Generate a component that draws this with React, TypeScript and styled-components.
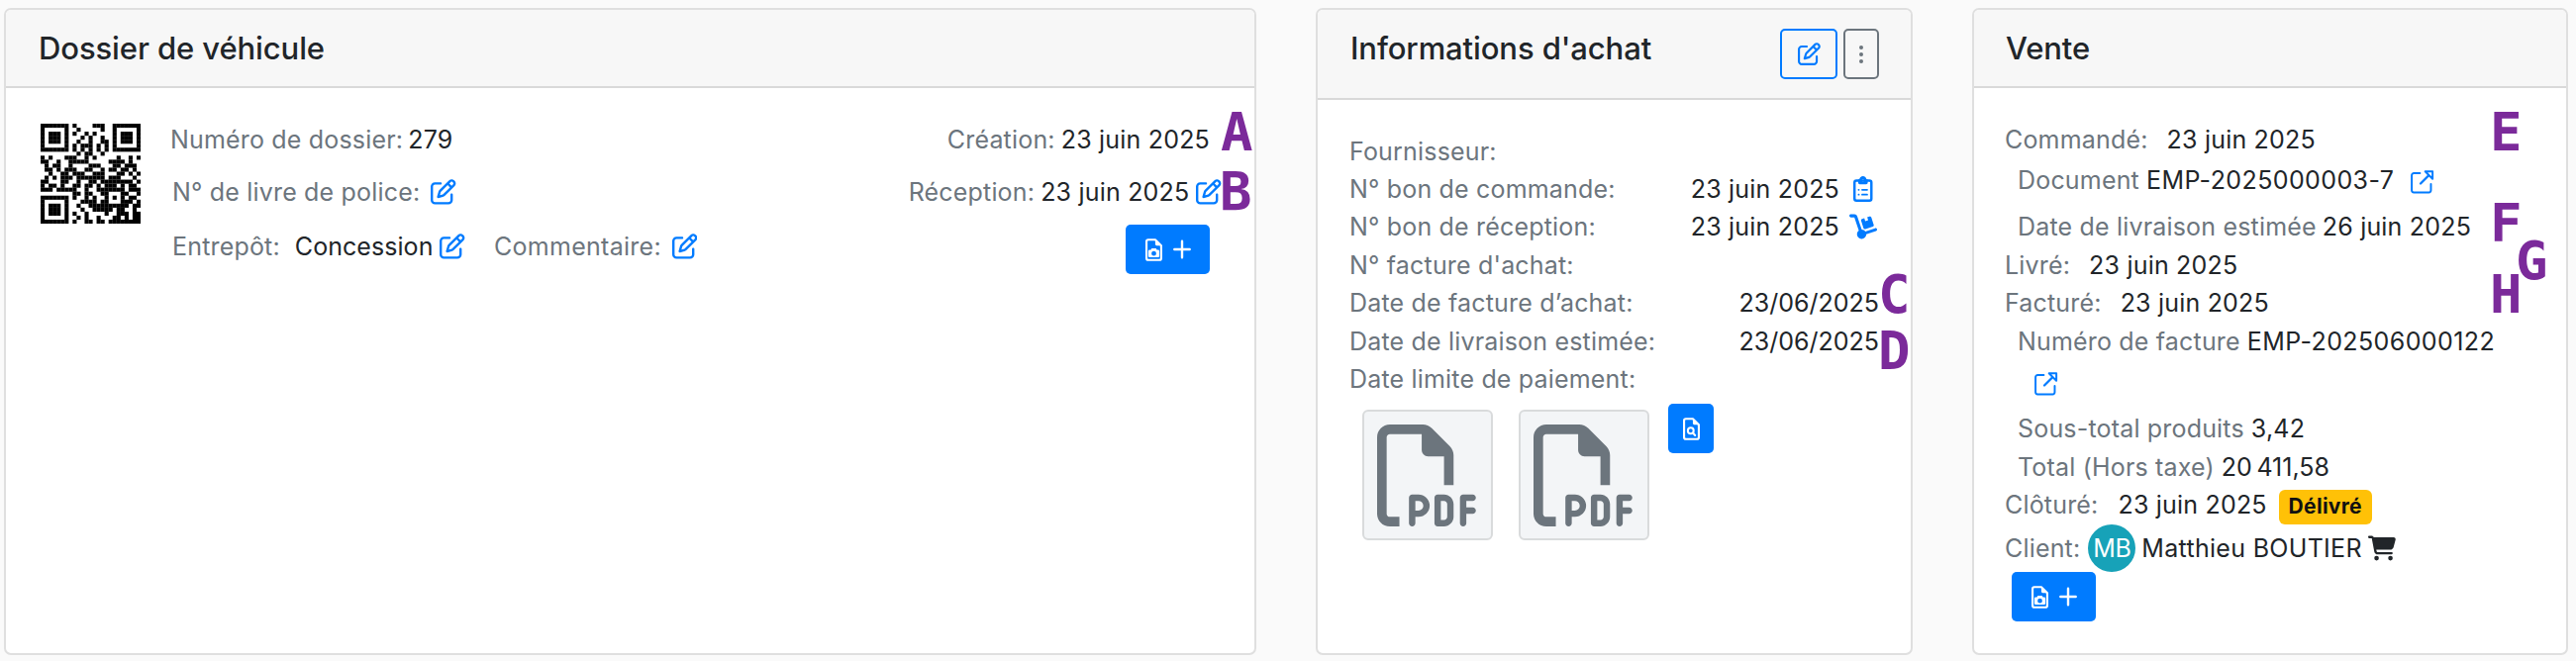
import React from 'react';
import styled, { createGlobalStyle } from 'styled-components';
import { FaCartShopping, FaDolly, FaRegFilePdf, FaRegPenToSquare } from 'react-icons/fa6';

const GlobalStyle = createGlobalStyle`
  *, *::before, *::after { box-sizing: border-box; }
  body {
    margin: 0;
    background: #fafafa;
    color: #212529;
    font-family: Inter, "Liberation Sans", sans-serif;
    font-size: 25px;
    line-height: 38px;
    letter-spacing: 0.18px;
  }
  svg { display: block; flex: none; }
`;

const Page = styled.main`
  position: relative;
  display: grid;
  grid-template-columns: 1265px 603px 602px;
  column-gap: 60px;
  width: 2602px;
  height: 668px;
  padding: 8px 0 6px 4px;
  overflow: hidden;
`;

const Card = styled.section`
  display: flex;
  flex-direction: column;
  border: 2px solid #dfdfdf;
  border-radius: 7px;
  background: #fff;
  overflow: hidden;
`;

const CardHeader = styled.header<{ $inset?: number }>`
  display: flex;
  justify-content: space-between;
  align-items: flex-start;
  padding: 19px 32px 19px ${p => p.$inset ?? 33}px;
  border-bottom: 2px solid #d9d9d9;
  background: #f7f7f7;
`;

const Title = styled.h5`
  margin: 1px 0 0;
  font-size: 31px;
  font-weight: 500;
  line-height: 38px;
  letter-spacing: -0.1px;
`;

const HeaderActions = styled.div`
  display: flex;
  gap: 6px;
`;

const OutlineButton = styled.button<{ $tone: string; $width: number }>`
  display: flex;
  align-items: center;
  justify-content: center;
  width: ${p => p.$width}px;
  height: 51px;
  padding: 0;
  border: 2px solid ${p => p.$tone};
  border-radius: 5px;
  background: transparent;
  color: ${p => p.$tone};
`;

const PrimaryButton = styled.button<{ $width?: number }>`
  display: flex;
  align-items: center;
  justify-content: center;
  gap: 11px;
  width: ${p => p.$width ?? 85}px;
  height: 50px;
  padding: 0;
  border: 0;
  border-radius: 5px;
  background: #007bff;
  color: #fff;
`;

const FileBody = styled.div`
  display: flex;
  padding: 33px 45px 0 35px;
`;

const QrBox = styled.div`
  width: 102px;
  margin: 3px 29px 0 0;
`;

const Column = styled.div<{ $end?: boolean }>`
  display: flex;
  flex-direction: column;
  align-items: ${p => (p.$end ? 'flex-end' : 'flex-start')};
  flex: ${p => (p.$end ? 'none' : '1')};
`;

const PurchaseBody = styled.div`
  padding: 33px 32px 0 32px;
`;

const SaleBody = styled.div`
  padding: 33px 20px 0 31px;
`;

const Row = styled.div<{ $top?: number; $indent?: number; $h?: number }>`
  display: flex;
  align-items: center;
  height: ${p => p.$h ?? 38}px;
  margin-top: ${p => p.$top ?? 0}px;
  padding-left: ${p => p.$indent ?? 0}px;
  white-space: nowrap;
`;

const Label = styled.span<{ $track?: number; $gap?: number }>`
  margin-left: ${p => p.$gap ?? 0}px;
  color: #6c757d;
  letter-spacing: ${p => p.$track ?? 0.18}px;
`;

const Value = styled.span<{ $gap?: number; $track?: number; $end?: boolean }>`
  margin-left: ${p => (p.$end ? 'auto' : `${p.$gap ?? 7}px`)};
  letter-spacing: ${p => p.$track ?? 0.2}px;
`;

const IconLink = styled.a<{ $gap: number; $drop?: number; $overhang?: number }>`
  display: flex;
  margin-left: ${p => p.$gap}px;
  margin-top: ${p => p.$drop ?? 0}px;
  margin-right: ${p => -(p.$overhang ?? 0)}px;
  color: #007bff;
`;

const IconSlot = styled.a`
  display: flex;
  justify-content: center;
  width: 28px;
  margin: 0 2px 0 10px;
  color: #007bff;
`;

const ActionSpot = styled.div<{ $top: number; $left?: number }>`
  margin-top: ${p => p.$top}px;
  margin-left: ${p => p.$left ?? 0}px;
`;

const Attachments = styled.div`
  display: flex;
  align-items: flex-start;
  padding: 6px 0 0 13px;
`;

const Thumb = styled.div`
  display: flex;
  align-items: center;
  width: 132px;
  height: 132px;
  margin: 6px 26px 0 0;
  padding-left: 13px;
  border: 2px solid #d9dbdc;
  border-radius: 6px;
  background: #f3f5f7;
  color: #6c757d;
`;

const PreviewSpot = styled.div`
  margin-left: -7px;
`;

const StatusBadge = styled.span`
  width: 94px;
  height: 35px;
  margin: 5px 0 0 12px;
  border-radius: 6px;
  background: #ffc107;
  color: #111;
  font-size: 21px;
  font-weight: 700;
  line-height: 33px;
  letter-spacing: 0.3px;
  text-align: center;
`;

const Avatar = styled.span`
  width: 48px;
  height: 48px;
  margin-left: 8px;
  border-radius: 50%;
  background: #17a2b8;
  color: #fff;
  line-height: 48px;
  text-align: center;
  letter-spacing: -0.4px;
`;

const CartSpot = styled.span`
  margin-left: 6px;
  color: #212529;
`;

const Marker = styled.b<{ $x: number; $y: number }>`
  position: absolute;
  left: ${p => p.$x}px;
  top: ${p => p.$y}px;
  color: #7b2a9a;
  font: 700 54px/40px "DejaVu Sans Mono", monospace;
  letter-spacing: 0;
`;

const QR_ROWS = [
  'XXXXXXX.X....XXX..XXXXXXX',
  'X.....X..X.....X..X.....X',
  'X.XXX.X.X..X.X....X.XXX.X',
  'X.XXX.X...X.X..X..X.XXX.X',
  'X.XXX.X..X..X..XX.X.XXX.X',
  'X.....X.X.XXX.X.X.X.....X',
  'XXXXXXX.X.X.X.X.X.XXXXXXX',
  '.........X.XX..X.........',
  'X.X...XXX..X.X.....X..X.X',
  'XX..X..XXXXX.....XXXX.X..',
  '.X.XX..X....XXX...XX.XXX.',
  '.XX.X.XXX..XX..X.XX.XX.X.',
  '..X..XX.XXX..XXX...XX.X.X',
  '.X.X.XXX.XXXXXXX.XXX...X.',
  'XX...XX..X..XX.XXXXXXXX.X',
  'X.XX.X..XX.XX.X.XXX.X.XX.',
  'XXX.XXXXX..X..XXXXXXX.XXX',
  '........XX.XX..XX...XX..X',
  'XXXXXXX.X..X.X..X.X.X.XX.',
  'X.....X...XXXX.XX...XXX.X',
  'X.XXX.X..X..XXXXXXXXXX.XX',
  'X.XXX.X...X..XXXXX.XX..X.',
  'X.XXX.X.X..X....X..XXX.XX',
  'X.....X..X.X..X...XX.X.XX',
  'XXXXXXX.X..XX.XX.XXXXXXXX',
];

const QrCode = () => (
  <svg width="101" height="101" viewBox="0 0 25 25">
    {QR_ROWS.flatMap((row, y) =>
      row.split('').map((cell, x) =>
        cell === 'X' ? <rect key={`${x}-${y}`} x={x} y={y} width="1.02" height="1.02" fill="#000" /> : null,
      ),
    )}
  </svg>
);

const FileOutline = () => (
  <>
    <path
      d="M64 24h160l136 136v288a40 40 0 0 1-40 40H64a40 40 0 0 1-40-40V64a40 40 0 0 1 40-40z"
      fill="none"
      stroke="currentColor"
      strokeWidth="48"
      strokeLinejoin="round"
    />
    <path d="M224 16v112a32 32 0 0 0 32 32h112z" fill="currentColor" />
  </>
);

const FileCameraIcon = () => (
  <svg width="17" height="23" viewBox="0 0 384 512">
    <FileOutline />
    <path
      fill="currentColor"
      fillRule="evenodd"
      d="M142 224h100l18 34h28a30 30 0 0 1 30 30v110a30 30 0 0 1-30 30H96a30 30 0 0 1-30-30V288a30 30 0 0 1 30-30h28zM192 286a54 54 0 1 0 0 108a54 54 0 1 0 0-108z"
    />
  </svg>
);

const FileSearchIcon = () => (
  <svg width="17" height="23" viewBox="0 0 384 512">
    <FileOutline />
    <g fill="none" stroke="currentColor" strokeWidth="46" strokeLinecap="round">
      <circle cx="176" cy="296" r="66" />
      <path d="M226 346l50 56" />
    </g>
  </svg>
);

const PlusIcon = () => (
  <svg width="18" height="20" viewBox="0 0 18 20">
    <path d="M9 1.8v16.4M1.3 10h15.4" stroke="currentColor" strokeWidth="2.4" strokeLinecap="round" />
  </svg>
);

const ClipboardIcon = () => (
  <svg width="19.5" height="26" viewBox="0 0 384 512">
    <rect x="24" y="88" width="336" height="400" rx="40" fill="none" stroke="currentColor" strokeWidth="48" />
    <path
      fill="currentColor"
      fillRule="evenodd"
      d="M192 0c-36 0-66 27-72 64H96v64a32 32 0 0 0 32 32h128a32 32 0 0 0 32-32V64h-24c-6-37-36-64-72-64zm0 58a24 24 0 1 1 0 48a24 24 0 1 1 0-48z"
    />
    <g stroke="currentColor" strokeWidth="34" strokeLinecap="round">
      <path d="M106 272h4M176 272h100M106 368h4M176 368h100" />
    </g>
  </svg>
);

const ExternalIcon = () => (
  <svg width="23.5" height="23.5" viewBox="0 0 24 24" fill="none" stroke="currentColor">
    <path
      d="M9.6 3.1H3.3A2.2 2.2 0 0 0 1.1 5.3v15.4a2.2 2.2 0 0 0 2.2 2.2h15.4a2.2 2.2 0 0 0 2.2-2.2v-6.3"
      strokeWidth="2"
      strokeLinecap="round"
    />
    <path d="M10.2 13.8L18.4 5.6" strokeWidth="2.3" strokeLinecap="round" />
    <path d="M15 1.3h7.6v7.6z" strokeWidth="2" strokeLinejoin="round" />
  </svg>
);

const DotsIcon = () => (
  <svg width="4" height="20" viewBox="0 0 4 20" fill="currentColor">
    <circle cx="2" cy="3" r="2" />
    <circle cx="2" cy="10" r="2" />
    <circle cx="2" cy="17" r="2" />
  </svg>
);

const EditLink = ({ gap, overhang }: { gap: number; overhang?: number }) => (
  <IconLink $gap={gap} $overhang={overhang}>
    <FaRegPenToSquare size={25.6} />
  </IconLink>
);

const AddFileButton = () => (
  <PrimaryButton>
    <FileCameraIcon />
    <PlusIcon />
  </PrimaryButton>
);

const MARKERS: [string, number, number][] = [
  ['A', 1233, 114],
  ['B', 1232, 174],
  ['C', 1897, 278],
  ['D', 1897, 335],
  ['E', 2515, 114],
  ['F', 2515, 206],
  ['G', 2541, 244],
  ['H', 2515, 278],
];

const VehicleFile = () => (
  <Card>
    <CardHeader>
      <Title>Dossier de véhicule</Title>
    </CardHeader>
    <FileBody>
      <QrBox>
        <QrCode />
      </QrBox>
      <Column>
        <Row>
          <Label>Numéro de dossier:</Label>
          <Value $gap={5}>279</Value>
        </Row>
        <Row $top={15} $indent={2}>
          <Label>N° de livre de police:</Label>
          <EditLink gap={11} />
        </Row>
        <Row $top={17} $indent={2}>
          <Label>Entrepôt:</Label>
          <Value $gap={15} $track={0.05}>Concession</Value>
          <EditLink gap={7} />
          <Label $gap={29} $track={0.27}>Commentaire:</Label>
          <EditLink gap={11} />
        </Row>
      </Column>
      <Column $end>
        <Row>
          <Label>Création:</Label>
          <Value $gap={6}>23 juin 2025</Value>
        </Row>
        <Row $top={15}>
          <Label>Réception:</Label>
          <Value $gap={6}>23 juin 2025</Value>
          <EditLink gap={7} overhang={12} />
        </Row>
        <ActionSpot $top={14}>
          <AddFileButton />
        </ActionSpot>
      </Column>
    </FileBody>
  </Card>
);

const Purchase = () => (
  <Card>
    <CardHeader>
      <Title>Informations d'achat</Title>
      <HeaderActions>
        <OutlineButton $tone="#007bff" $width={58}>
          <FaRegPenToSquare size={23} />
        </OutlineButton>
        <OutlineButton $tone="#6c757d" $width={36}>
          <DotsIcon />
        </OutlineButton>
      </HeaderActions>
    </CardHeader>
    <PurchaseBody>
      <Row>
        <Label>Fournisseur:</Label>
      </Row>
      <Row>
        <Label>N° bon de commande:</Label>
        <Value $end>23 juin 2025</Value>
        <IconSlot>
          <ClipboardIcon />
        </IconSlot>
      </Row>
      <Row>
        <Label>N° bon de réception:</Label>
        <Value $end>23 juin 2025</Value>
        <IconSlot>
          <FaDolly size={28} />
        </IconSlot>
      </Row>
      <Row $top={1}>
        <Label>N° facture d'achat:</Label>
      </Row>
      <Row>
        <Label>Date de facture d’achat:</Label>
        <Value $end $track={0}>23/06/2025</Value>
      </Row>
      <Row $top={1}>
        <Label>Date de livraison estimée:</Label>
        <Value $end $track={0}>23/06/2025</Value>
      </Row>
      <Row>
        <Label>Date limite de paiement:</Label>
      </Row>
      <Attachments>
        <Thumb>
          <FaRegFilePdf size={103} />
        </Thumb>
        <Thumb>
          <FaRegFilePdf size={103} />
        </Thumb>
        <PreviewSpot>
          <PrimaryButton $width={46}>
            <FileSearchIcon />
          </PrimaryButton>
        </PreviewSpot>
      </Attachments>
    </PurchaseBody>
  </Card>
);

const Sale = () => (
  <Card>
    <CardHeader $inset={32}>
      <Title>Vente</Title>
    </CardHeader>
    <SaleBody>
      <Row>
        <Label>Commandé:</Label>
        <Value $gap={19}>23 juin 2025</Value>
      </Row>
      <Row $top={3} $indent={13}>
        <Label>Document</Label>
        <Value $track={0.4}>EMP-2025000003-7</Value>
        <IconLink $gap={17} $drop={4}>
          <ExternalIcon />
        </IconLink>
      </Row>
      <Row $top={9} $indent={13}>
        <Label>Date de livraison estimée</Label>
        <Value $gap={6}>26 juin 2025</Value>
      </Row>
      <Row $top={1}>
        <Label>Livré:</Label>
        <Value $gap={19}>23 juin 2025</Value>
      </Row>
      <Row>
        <Label>Facturé:</Label>
        <Value $gap={19}>23 juin 2025</Value>
      </Row>
      <Row $top={1} $indent={13}>
        <Label>Numéro de facture</Label>
        <Value $track={0.4}>EMP-202506000122</Value>
      </Row>
      <Row $top={5} $indent={13}>
        <IconLink $gap={17}>
          <ExternalIcon />
        </IconLink>
      </Row>
      <Row $top={7} $indent={13}>
        <Label>Sous-total produits</Label>
        <Value>3,42</Value>
      </Row>
      <Row $top={1} $indent={13}>
        <Label>Total (Hors taxe)</Label>
        <Value>20{'\u202f'}411,58</Value>
      </Row>
      <Row>
        <Label>Clôturé:</Label>
        <Value $gap={20}>23 juin 2025</Value>
        <StatusBadge>Délivré</StatusBadge>
      </Row>
      <Row $top={1} $h={48}>
        <Label>Client:</Label>
        <Avatar>MB</Avatar>
        <Value $gap={6} $track={0.3}>Matthieu BOUTIER</Value>
        <CartSpot>
          <FaCartShopping size={28} />
        </CartSpot>
      </Row>
      <ActionSpot $top={0} $left={7}>
        <AddFileButton />
      </ActionSpot>
    </SaleBody>
  </Card>
);

export default function App() {
  return (
    <>
      <GlobalStyle />
      <Page>
        <VehicleFile />
        <Purchase />
        <Sale />
        {MARKERS.map(([letter, x, y]) => (
          <Marker key={letter} $x={x} $y={y}>
            {letter}
          </Marker>
        ))}
      </Page>
    </>
  );
}
